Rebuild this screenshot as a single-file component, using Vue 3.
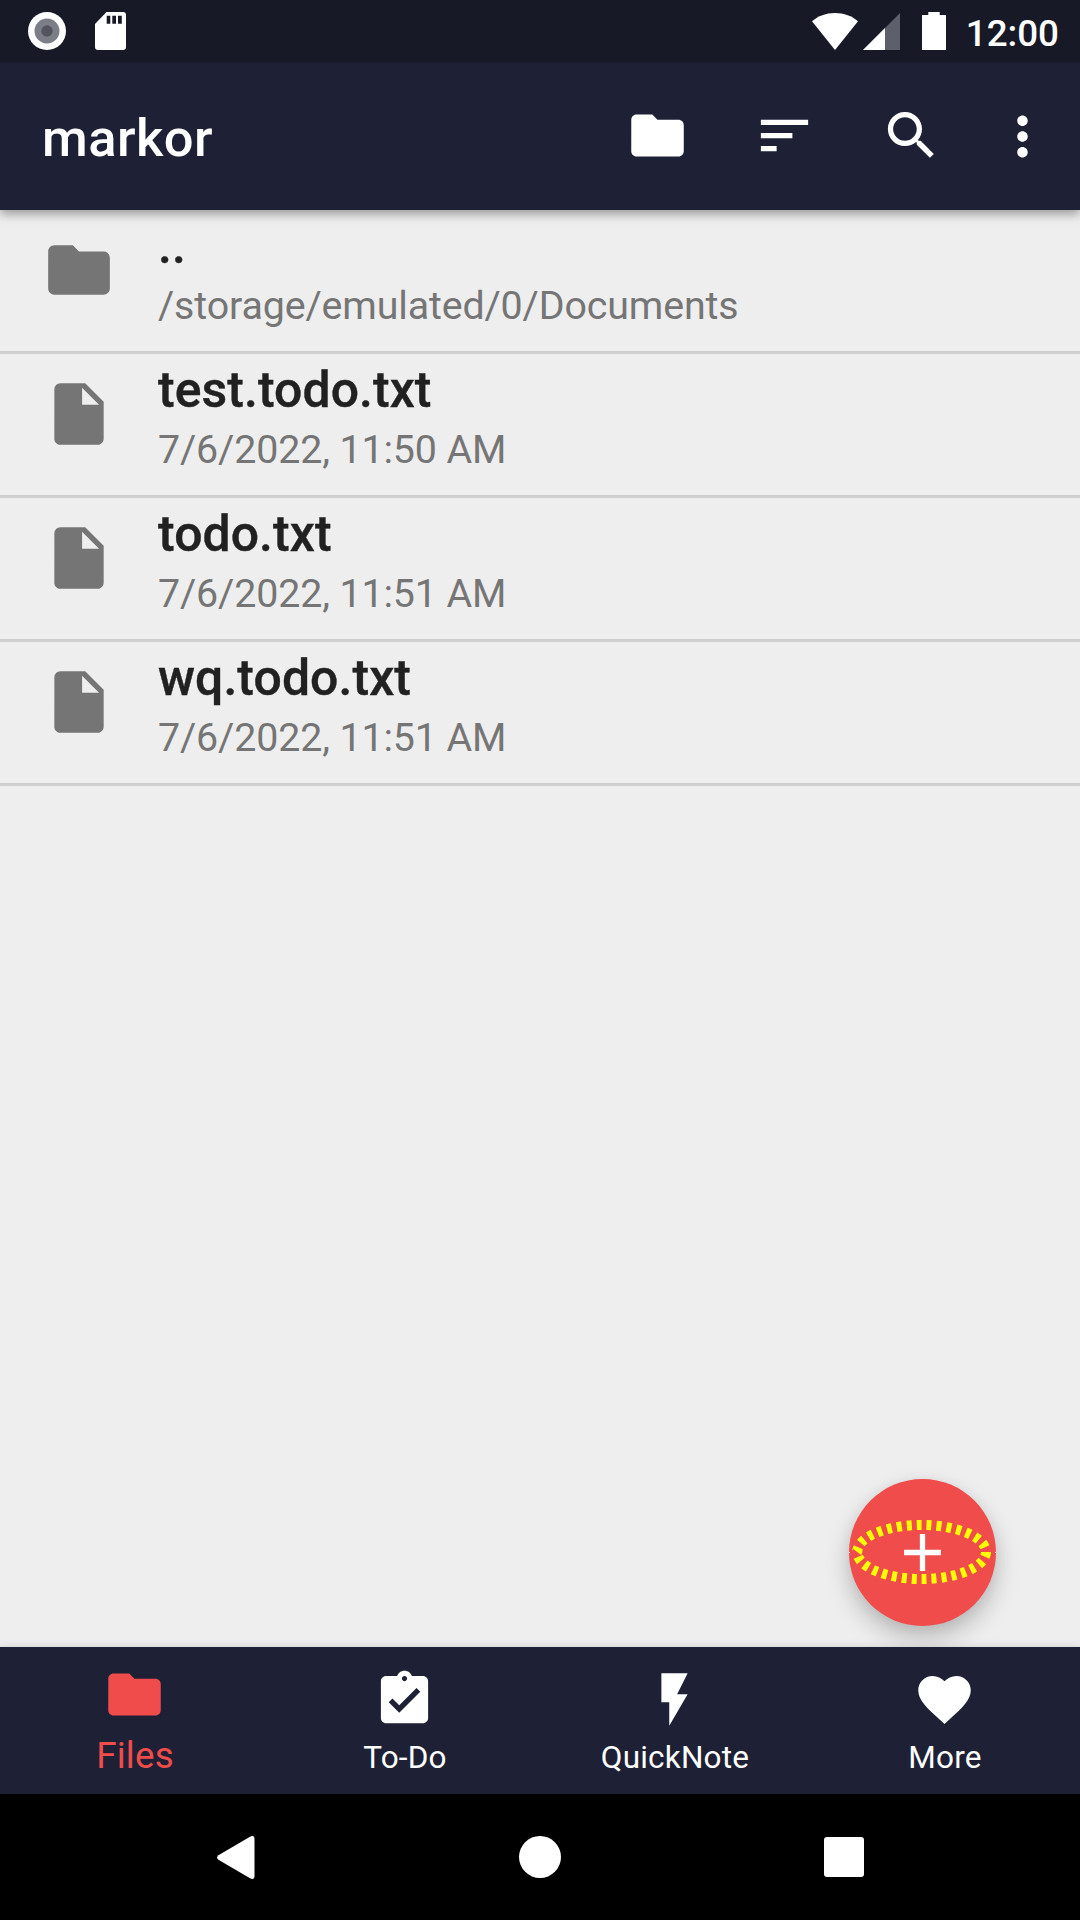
<script setup>
const FOLDER = 'M10 4H4c-1.1 0-1.99.9-1.99 2L2 18c0 1.1.9 2 2 2h16c1.1 0 2-.9 2-2V8c0-1.1-.9-2-2-2h-8l-2-2z'
const FILE = 'M6 2c-1.1 0-1.99.9-1.99 2L4 20c0 1.1.89 2 1.99 2H18c1.1 0 2-.9 2-2V8l-6-6H6zm7 7V3.5L18.5 9H13z'

const entries = [
  { name: '..', info: '/storage/emulated/0/Documents', icon: FOLDER },
  { name: 'test.todo.txt', info: '7/6/2022, 11:50 AM', icon: FILE },
  { name: 'todo.txt', info: '7/6/2022, 11:51 AM', icon: FILE },
  { name: 'wq.todo.txt', info: '7/6/2022, 11:51 AM', icon: FILE },
]

const actions = [
  { label: 'Go to folder', icon: FOLDER },
  { label: 'Sort', icon: 'M3 18h6v-2H3v2zM3 6v2h18V6H3zm0 7h12v-2H3v2z' },
  { label: 'Search', icon: 'M15.5 14h-.79l-.28-.27C15.41 12.59 16 11.11 16 9.5 16 5.91 13.09 3 9.5 3S3 5.91 3 9.5 5.91 16 9.5 16c1.61 0 3.09-.59 4.23-1.57l.27.28v.79l5 4.99L20.49 19l-4.99-5zm-6 0C7.01 14 5 11.99 5 9.5S7.01 5 9.5 5 14 7.01 14 9.5 11.99 14 9.5 14z' },
]

const tabs = [
  { label: 'Files', active: true, icon: FOLDER },
  { label: 'To-Do', icon: 'M19 3h-4.18C14.4 1.84 13.3 1 12 1c-1.3 0-2.4.84-2.82 2H5c-1.1 0-2 .9-2 2v14c0 1.1.9 2 2 2h14c1.1 0 2-.9 2-2V5c0-1.1-.9-2-2-2zm-7 0c.55 0 1 .45 1 1s-.45 1-1 1-1-.45-1-1 .45-1 1-1zm-2 14l-4-4 1.41-1.41L10 14.17l6.59-6.59L18 9l-8 8z' },
  { label: 'QuickNote', icon: 'M7 2v11h3v9l7-12h-4l4-8z' },
  { label: 'More', icon: 'M12 21.35l-1.45-1.32C5.4 15.36 2 12.28 2 8.5 2 5.42 4.42 3 7.5 3c1.74 0 3.41.81 4.5 2.09C13.09 3.81 14.76 3 16.5 3 19.58 3 22 5.42 22 8.5c0 3.78-3.4 6.86-8.55 11.54L12 21.35z' },
]
</script>

<template>
  <div class="screen">
    <header class="status">
      <div class="notifications">
        <svg width="38" height="38" viewBox="0 0 38 38">
          <circle cx="19" cy="19" r="19" fill="#fff" />
          <circle cx="19" cy="19" r="12.5" fill="#7b7d87" />
          <circle cx="19" cy="19" r="5.7" fill="#53545f" />
        </svg>
        <svg width="31" height="38" viewBox="0 0 31 38">
          <path fill="#fff" fill-rule="evenodd" d="M11.5 0H28a3 3 0 0 1 3 3v32a3 3 0 0 1-3 3H3a3 3 0 0 1-3-3V12zM11.7 3.7v8h3.6v-8zM17.3 3.7v8h3.7v-8zM23 3.7v8h3.8v-8z" />
        </svg>
      </div>
      <div class="system">
        <svg class="wifi" width="46" height="37" viewBox="0 0 46 37">
          <path fill="#fff" d="M23 37L0 8.3C6 3 14 0 23 0s17 3 23 8.3z" />
        </svg>
        <svg class="signal" width="37" height="37" viewBox="0 0 37 37">
          <path fill="#5d5f6a" d="M37 0v37H0z" />
          <path fill="#fff" d="M22 15v22H0z" />
        </svg>
        <svg class="battery" width="24" height="38" viewBox="0 0 24 38">
          <path fill="#fff" d="M6.3 0h11.4v3H24v35H0V3h6.3z" />
        </svg>
        <span class="clock">12:00</span>
      </div>
    </header>

    <div class="toolbar">
      <h1>markor</h1>
      <div class="actions">
        <button v-for="a in actions" :key="a.label" :aria-label="a.label">
          <svg width="63" height="63" viewBox="0 0 24 24"><path :d="a.icon" /></svg>
        </button>
        <button class="overflow" aria-label="More options">
          <svg width="63" height="63" viewBox="0 0 24 24">
            <path d="M12 8c1.1 0 2-.9 2-2s-.9-2-2-2-2 .9-2 2 .9 2 2 2zm0 2c-1.1 0-2 .9-2 2s.9 2 2 2 2-.9 2-2-.9-2-2-2zm0 6c-1.1 0-2 .9-2 2s.9 2 2 2 2-.9 2-2-.9-2-2-2z" />
          </svg>
        </button>
      </div>
    </div>

    <main class="content">
      <ul>
        <li v-for="e in entries" :key="e.name">
          <svg class="kind" width="74" height="74" viewBox="0 0 24 24"><path :d="e.icon" /></svg>
          <div class="text">
            <span class="name">{{ e.name }}</span>
            <span class="info">{{ e.info }}</span>
          </div>
        </li>
      </ul>
      <button class="fab" aria-label="Create">
        <svg width="147" height="147" viewBox="0 0 147 147">
          <path d="M55.1 73.5h36.8M73.5 55.1v36.8" stroke="#fff" stroke-width="5.3" />
          <ellipse class="focus" cx="72.6" cy="73" rx="64.4" ry="27" pathLength="300" />
          <path d="M0 73.5h1M146 73.5h1" stroke="#f6dede" stroke-width="1" />
        </svg>
      </button>
    </main>

    <nav class="tabs">
      <div v-for="t in tabs" :key="t.label" class="tab" :class="{ active: t.active }">
        <svg width="63" height="63" viewBox="0 0 24 24"><path :d="t.icon" /></svg>
        <span>{{ t.label }}</span>
      </div>
    </nav>

    <footer class="system-nav">
      <svg width="38" height="43" viewBox="0 0 38 43">
        <path fill="#fff" d="M1.4 19.2L32.6.9Q37.5-1.5 37.5 3v37q0 4.5-4.9 2.1L1.4 23.8Q-1.2 21.5 1.4 19.2z" />
      </svg>
      <svg width="42" height="42" viewBox="0 0 42 42"><circle cx="21" cy="21" r="21" fill="#fff" /></svg>
      <svg width="40" height="40" viewBox="0 0 40 40"><rect width="40" height="40" rx="3" fill="#fff" /></svg>
    </footer>
  </div>
</template>

<style>
body {
  margin: 0;
}
</style>

<style scoped>
.screen {
  width: 1080px;
  height: 1920px;
  display: flex;
  flex-direction: column;
  overflow: hidden;
  background: #eee;
  font-family: Roboto, "Noto Sans", sans-serif;
}
svg {
  display: block;
  flex: none;
}
button {
  border: 0;
  padding: 0;
  background: none;
}
.status {
  height: 63px;
  flex: none;
  display: flex;
  justify-content: space-between;
  background: #171926;
  z-index: 2;
}
.notifications {
  display: flex;
  gap: 29px;
  padding: 12.4px 0 0 28.4px;
}
.system {
  display: flex;
  padding: 13px 21px 0 0;
}
.signal {
  margin-left: 5px;
}
.battery {
  margin: -1px 20px 0 22px;
}
.clock {
  margin-top: -1px;
  color: #fff;
  font-size: 36.75px;
  font-weight: 500;
  line-height: 44px;
}
.toolbar {
  height: 147px;
  flex: none;
  display: flex;
  justify-content: space-between;
  background: #1e2035;
  box-shadow: 0 4px 10px rgba(0, 0, 0, 0.36);
  z-index: 1;
}
h1 {
  margin: 0;
  padding: 4px 0 0 42px;
  color: #fff;
  font-size: 52.5px;
  font-weight: 500;
  letter-spacing: 0.45px;
  line-height: 142px;
}
.actions {
  display: flex;
  gap: 64px;
  padding: 41px 26px 0 0;
}
.actions path {
  fill: #fff;
}
.overflow {
  margin: 1px 0 0 -16px;
}
.actions button {
  height: 63px;
}
.content {
  flex: 1;
  position: relative;
}
ul {
  margin: 0;
  padding: 0;
  list-style: none;
}
li {
  height: 144px;
  box-sizing: border-box;
  border-bottom: 3px solid #cfcfcf;
  display: flex;
  padding-left: 42px;
}
.kind {
  margin-top: 23px;
  fill: #757575;
}
.text {
  display: flex;
  flex-direction: column;
  gap: 8px;
  padding: 7px 0 0 42px;
}
.name {
  color: #212121;
  font-size: 49.875px;
  font-weight: 500;
  letter-spacing: 0.1px;
  line-height: 58px;
  -webkit-text-stroke: 0.4px #212121;
}
.info {
  color: #757575;
  font-size: 39.375px;
  letter-spacing: -0.13px;
  line-height: 46px;
}
.fab {
  position: absolute;
  right: 84px;
  bottom: 21px;
  width: 147px;
  height: 147px;
  border-radius: 50%;
  background: #f04c4b;
  box-shadow: 0 12px 24px rgba(0, 0, 0, 0.22), 0 2px 14px rgba(0, 0, 0, 0.05);
}
.focus {
  fill: none;
  stroke: #ff0;
  stroke-width: 10;
  stroke-dasharray: 5 5;
}
.tabs {
  height: 147px;
  flex: none;
  display: flex;
  background: #1e2035;
  box-shadow: 0 0 8px rgba(0, 0, 0, 0.12);
  z-index: 1;
}
.tab {
  flex: 1;
  display: flex;
  flex-direction: column;
  align-items: center;
  gap: 8px;
  padding-top: 21px;
  color: #fff;
  fill: #fff;
  font-size: 31.5px;
  letter-spacing: 0.2px;
  line-height: 38px;
}
.tab svg {
  margin-left: -2px;
}
.tab.active {
  padding-top: 15.5px;
  color: #f04c4b;
  fill: #f04c4b;
  font-size: 36.75px;
  line-height: 44px;
}
.system-nav {
  height: 126px;
  flex: none;
  display: flex;
  align-items: center;
  justify-content: space-between;
  box-sizing: border-box;
  padding: 0 216px 0 217px;
  background: #000;
  z-index: 1;
}
</style>
